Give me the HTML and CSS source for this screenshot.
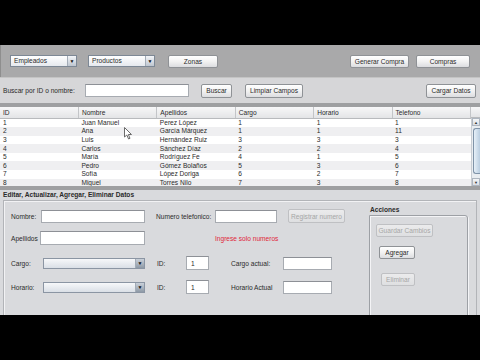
FILE: index.html
```html
<!DOCTYPE html>
<html lang="es">
 <head>
  <meta charset="UTF-8">
  <title>Empleados</title>
  <link rel="stylesheet" href="styles.css">
 </head>
<body>

<div class="app">

 <!-- Barra superior -->
 <div class="toolbar">
  <div class="combo ancho-menu"><span>Empleados</span><i>&#9660;</i></div>
  <div class="combo ancho-menu sep-menu"><span>Productos</span><i>&#9660;</i></div>
  <button class="boton b-zonas">Zonas</button>
  <div class="relleno"></div>
  <button class="boton b-generar">Generar Compra</button>
  <button class="boton b-compras">Compras</button>
 </div>

 <!-- Busqueda -->
 <div class="busqueda">
  <span class="lbl-buscar">Buscar por ID o nombre:</span>
  <input type="text" class="campo c-buscar">
  <button class="boton b-buscar">Buscar</button>
  <button class="boton b-limpiar">Limpiar Campos</button>
  <div class="relleno"></div>
  <button class="boton b-cargar">Cargar Datos</button>
 </div>

 <!-- Tabla -->
 <div class="rejilla">
  <div class="tabla">
   <table>
    <thead>
     <tr><th>ID</th><th>Nombre</th><th>Apellidos</th><th>Cargo</th><th>Horario</th><th>Telefono</th></tr>
    </thead>
    <tbody>
     <tr><td>1</td><td>Juan Manuel</td><td>Perez López</td><td>1</td><td>1</td><td>1</td></tr>
     <tr><td>2</td><td>Ana</td><td>García Márquez</td><td>1</td><td>1</td><td>11</td></tr>
     <tr><td>3</td><td>Luis</td><td>Hernández Ruiz</td><td>3</td><td>3</td><td>3</td></tr>
     <tr><td>4</td><td>Carlos</td><td>Sánchez Díaz</td><td>2</td><td>2</td><td>4</td></tr>
     <tr><td>5</td><td>María</td><td>Rodríguez Fe</td><td>4</td><td>1</td><td>5</td></tr>
     <tr><td>6</td><td>Pedro</td><td>Gómez Bolaños</td><td>5</td><td>3</td><td>6</td></tr>
     <tr><td>7</td><td>Sofía</td><td>López Doriga</td><td>6</td><td>2</td><td>7</td></tr>
     <tr><td>8</td><td>Miguel</td><td>Torres Nilo</td><td>7</td><td>3</td><td>8</td></tr>
    </tbody>
   </table>
  </div>
  <div class="scroll">
   <div class="esquina"></div>
   <div class="pista">
    <div class="flecha">&#9650;</div>
    <div class="pulgar"></div>
    <div class="flecha">&#9660;</div>
   </div>
  </div>
 </div>

 <div class="titulo">Editar, Actualizar, Agregar, Eliminar Datos</div>

 <!-- Formulario -->
 <div class="panel">
  <div class="campos">

   <div class="fila f1">
    <span class="lbl w-nombre">Nombre:</span>
    <input type="text" class="campo c-nombre">
    <span class="lbl w-tel">Numero telefonico:</span>
    <input type="text" class="campo c-tel">
    <button class="boton apagado b-registrar">Registrar numero</button>
   </div>

   <div class="fila f2">
    <span class="lbl w-apellidos">Apellidos</span>
    <input type="text" class="campo c-apellidos">
    <span class="aviso">Ingrese solo numeros</span>
   </div>

   <div class="fila f3">
    <span class="lbl w-cargo">Cargo:</span>
    <div class="combo vacio c-cargo"><span></span><i>&#9660;</i></div>
    <span class="lbl w-id">ID:</span>
    <input type="text" class="campo c-id" value="1">
    <span class="lbl w-actual">Cargo actual:</span>
    <input type="text" class="campo c-actual">
   </div>

   <div class="fila f4">
    <span class="lbl w-cargo">Horario:</span>
    <div class="combo vacio c-cargo"><span></span><i>&#9660;</i></div>
    <span class="lbl w-id">ID:</span>
    <input type="text" class="campo c-id" value="1">
    <span class="lbl w-actual">Horario Actual</span>
    <input type="text" class="campo c-actual">
   </div>

  </div>

  <div class="acciones">
   <div class="acc-titulo">Acciones</div>
   <div class="acc-caja">
    <button class="boton apagado b-guardar">Guardar Cambios</button>
    <button class="boton b-agregar">Agregar</button>
    <button class="boton apagado b-eliminar">Eliminar</button>
   </div>
  </div>
 </div>

 <!-- Puntero del raton -->
 <svg class="puntero" width="9" height="13" viewBox="0 0 9 13">
  <path d="M0.5 0.5 L0.5 10 L2.8 8 L4.6 12 L6 11.3 L4.3 7.5 L7.5 7.5 Z" fill="#FFFFFF" stroke="#6A6A6A" stroke-width="1"/>
 </svg>

</div>

</body>
</html>
```

FILE: styles.css
```css
body {
 margin: 0;
 background: #000000;
 font-family: "Liberation Sans", Arial, sans-serif;
 font-size: 6.6px;
 color: #2A2A2A;
}

.app {
 position: relative;
 margin-top: 45px;
 height: 270px;
 overflow: hidden;
 background: #D9DADD;
}

.relleno {
 flex: 1;
}

/* Barra superior */
.toolbar {
 height: 32px;
 display: flex;
 align-items: center;
 padding: 0 10px 0 9px;
 background: #A9A9AA;
 border-left: 1px solid #8E8E8E;
 box-sizing: border-box;
}

.busqueda {
 height: 26px;
 display: flex;
 align-items: center;
 padding: 0 4px 0 3px;
 background: #D6D6D8;
 border-top: 1px solid #C4C4C4;
 box-sizing: border-box;
}

/* Controles */
.boton {
 height: 13px;
 padding: 0;
 font-family: inherit;
 font-size: 6.6px;
 white-space: nowrap;
 overflow: hidden;
 color: #2A2A2A;
 border: 1px solid #8F9296;
 border-radius: 2px;
 background: linear-gradient(#FFFFFF, #F2F2F2 50%, #DCDDE0);
 box-sizing: border-box;
}

.boton.apagado {
 color: #A6A6A6;
 border-color: #BFC0C3;
 background: linear-gradient(#EBEBEC, #DEDFE1);
}

.campo {
 height: 13px;
 padding: 0 0 0 4px;
 font-family: inherit;
 font-size: 6.6px;
 color: #2A2A2A;
 border: 1px solid #A7ABB1;
 border-top-color: #8D9096;
 background: #FFFFFF;
 box-sizing: border-box;
 outline: none;
}

.combo {
 height: 12px;
 display: flex;
 border: 1px solid #7D8895;
 background: linear-gradient(#FFFFFF, #E6E9EE);
 box-sizing: border-box;
}

.combo span {
 flex: 1;
 padding-left: 3px;
 line-height: 10px;
}

.combo i {
 width: 8px;
 font-style: normal;
 font-size: 5px;
 line-height: 10px;
 text-align: center;
 color: #111111;
 border-left: 1px solid #A3ACB7;
 background: linear-gradient(#F3F5F8, #BEC6D0);
}

.combo.vacio {
 height: 11px;
 border-color: #8B95A3;
 background: linear-gradient(#F7F8FA, #DADFE6);
}

.combo.vacio i {
 line-height: 9px;
 background: linear-gradient(#C9D0D9, #8E99A6);
}

.ancho-menu { width: 67px; }
.sep-menu { margin-left: 11px; }
.b-zonas { width: 50px; margin-left: 13px; }
.b-generar { width: 59px; }
.b-compras { width: 54px; margin-left: 7px; }

.lbl-buscar { width: 82px; }
.c-buscar { width: 104px; }
.b-buscar { width: 31px; height: 14px; margin-left: 12px; }
.b-limpiar { width: 58px; height: 14px; margin-left: 13px; }
.b-cargar { width: 50px; height: 14px; }

/* Tabla */
.rejilla {
 display: flex;
 height: 87px;
 border-top: 4px solid #9E9FA1;
 border-bottom: 4px solid #9E9FA1;
 box-sizing: border-box;
 background: #FFFFFF;
}

.tabla {
 flex: 1;
 overflow: hidden;
}

.tabla table {
 width: 100%;
 border-collapse: collapse;
 table-layout: fixed;
}

.tabla th {
 height: 11px;
 padding: 0 0 0 3px;
 font-weight: normal;
 text-align: left;
 background: linear-gradient(#F7F7F8, #E3E4E6);
 border-right: 1px solid #C3C5C8;
 border-bottom: 1px solid #B8BABD;
 box-sizing: border-box;
}

.tabla td {
 height: 8.6px;
 padding: 0 0 0 3px;
 line-height: 8px;
 white-space: nowrap;
 overflow: hidden;
}

.tabla tbody tr:nth-child(even) {
 background: #EFEFF1;
}

.scroll {
 width: 9px;
 display: flex;
 flex-direction: column;
}

.esquina {
 height: 11px;
 background: linear-gradient(#F7F7F8, #E3E4E6);
 border-bottom: 1px solid #B8BABD;
 box-sizing: border-box;
}

.pista {
 flex: 1;
 display: flex;
 flex-direction: column;
 background: #E9EDF1;
 border-left: 1px solid #C8CDD3;
}

.flecha {
 height: 8px;
 font-size: 4px;
 line-height: 8px;
 text-align: center;
 color: #333333;
 background: linear-gradient(#F4F6F8, #D9DEE4);
 border: 1px solid #AEB6C0;
 box-sizing: border-box;
}

.pulgar {
 height: 44px;
 margin: 2px 0 auto 1px;
 border: 1px solid #7F93A8;
 border-right: none;
 border-radius: 3px 0 0 3px;
 background: linear-gradient(90deg, #E7F0F8, #B9CDE0);
}

/* Formulario */
.titulo {
 height: 10px;
 line-height: 10px;
 padding-left: 3px;
 font-weight: bold;
}

.panel {
 display: flex;
 margin: 0 3px;
 height: 120px;
 border-top: 1px solid #B2B4B8;
 border-left: 1px solid #B2B4B8;
 border-right: 1px solid #B2B4B8;
 box-shadow: inset 1px 1px 0 #F2F2F4;
}

.campos {
 flex: 1;
 padding: 8px 0 0 7px;
}

.fila {
 display: flex;
 align-items: center;
 height: 14px;
}

.f2 { margin-top: 8px; }
.f3 { margin-top: 11px; }
.f4 { margin-top: 10px; }

.w-nombre { width: 30px; }
.c-nombre { width: 104px; }
.w-tel { width: 59px; margin-left: 11px; }
.c-tel { width: 62px; }
.b-registrar { width: 57px; height: 14px; margin-left: 11px; }

.w-apellidos { width: 29px; }
.c-apellidos { width: 105px; height: 14px; }

.aviso {
 margin-left: 70px;
 color: #E0263A;
}

.w-cargo { width: 32px; }
.c-cargo { width: 102px; }
.w-id { width: 29px; margin-left: 12px; }
.c-id { width: 23px; height: 14px; }
.w-actual { width: 52px; margin-left: 22px; }
.c-actual { width: 49px; }

.acciones {
 width: 99px;
 margin-right: 8px;
 padding-top: 5px;
}

.acc-titulo {
 height: 9px;
 padding-left: 1px;
 font-weight: bold;
}

.acc-caja {
 height: 110px;
 display: flex;
 flex-direction: column;
 align-items: flex-start;
 border: 1px solid #9DA0A5;
 border-radius: 0 3px 0 0;
 box-shadow: inset 1px 1px 0 #F4F4F6, 1px 1px 0 #F4F4F6;
}

.b-guardar { width: 57px; margin: 8px 0 0 6px; }
.b-agregar { width: 36px; margin: 9px 0 0 9px; }
.b-eliminar { width: 34px; margin: 14px 0 0 11px; }

/* Puntero */
.puntero {
 position: absolute;
 left: 124px;
 top: 82px;
}
```
